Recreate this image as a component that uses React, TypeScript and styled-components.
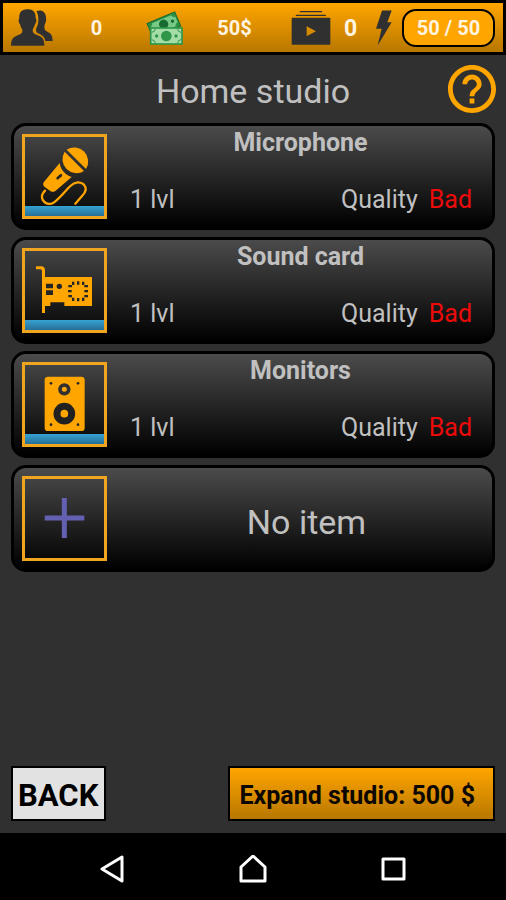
import React from "react";
import styled, { createGlobalStyle } from "styled-components";

const GlobalStyle = createGlobalStyle`
  * { box-sizing: border-box; }
  body { margin: 0; background: #303030; }
  button { font: inherit; color: inherit; cursor: pointer; }
`;

const orange = "#ffa500";
const orangeFade = "linear-gradient(#ffa500, #b87700)";

const Screen = styled.div`
  display: flex;
  flex-direction: column;
  min-height: 100vh;
  background: #303030;
  color: #c0c0c0;
  font-family: Roboto, "Liberation Sans", sans-serif;
`;

const StatusBar = styled.header`
  display: grid;
  grid-template-columns: 129fr 139fr 79fr 119px;
  align-items: center;
  gap: 6px;
  height: 55px;
  padding: 0 8px;
  border: 3px solid #000;
  background: ${orangeFade};
  color: #fff4e0;
`;

const Stat = styled.div`
  display: flex;
  align-items: center;
  justify-content: space-between;
`;

const StatValue = styled.span<{ $size?: number }>`
  flex: 1;
  padding-top: 1px;
  text-align: center;
  font-size: ${(p) => p.$size ?? 20}px;
  font-weight: 700;
`;

const EnergyPill = styled.span`
  display: flex;
  align-items: center;
  justify-content: center;
  width: 93px;
  height: 38px;
  padding-top: 1px;
  border: 2px solid #000;
  border-radius: 14px;
  background: ${orange};
  font-size: 20px;
  font-weight: 700;
`;

const TitleRow = styled.div`
  display: grid;
  grid-template-columns: 1fr auto 1fr;
  align-items: center;
  height: 68px;
  padding: 0 10px;
`;

const Title = styled.h1`
  grid-column: 2;
  margin: 0;
  padding-top: 3px;
  font-size: 34px;
  font-weight: 400;
  line-height: 40px;
`;

const IconButton = styled.button`
  display: flex;
  padding: 0;
  border: 0;
  background: none;
`;

const HelpButton = styled(IconButton)`
  justify-self: end;
`;

const ItemList = styled.ul`
  display: flex;
  flex-direction: column;
  gap: 7px;
  margin: 0;
  padding: 0 11px;
  list-style: none;
`;

const Card = styled.li`
  display: flex;
  padding: 8px 0 8px 8px;
  border: 3px solid #000;
  border-radius: 15px;
  background: linear-gradient(#4b4b4b, #000);
`;

const Thumb = styled.button`
  display: flex;
  flex-direction: column;
  width: 85px;
  height: 85px;
  padding: 0;
  border: 3px solid #efa51f;
  background: none;
  position: relative;
`;

const Wear = styled.span`
  position: absolute;
  left: 0;
  right: 0;
  bottom: 0;
  height: 10px;
  background: linear-gradient(#36a3d2, #256f96);
`;

const CardBody = styled.div`
  display: flex;
  flex: 1;
  flex-direction: column;
  justify-content: space-between;
`;

const CardName = styled.h2`
  margin: -6px 0 0;
  padding-left: 2px;
  font-size: 25px;
  font-weight: 700;
  line-height: 30px;
  text-align: center;
`;

const Details = styled.p`
  display: flex;
  gap: 11px;
  margin: 0;
  padding: 0 20px 3px 23px;
  font-size: 25px;
  line-height: 32px;
`;

const Level = styled.span`
  flex: 1;
`;

const Rating = styled.strong`
  color: #ec0b0b;
  font-weight: 400;
`;

const EmptyLabel = styled.span`
  flex: 1;
  align-self: center;
  padding: 6px 0 0 14px;
  font-size: 34px;
  line-height: 40px;
  text-align: center;
`;

const Actions = styled.div`
  display: flex;
  justify-content: space-between;
  margin-top: auto;
  padding: 12px 11px;
`;

const BackButton = styled.button`
  height: 55px;
  padding: 4px 6px 0 5px;
  border: 2px solid #000;
  background: #e2e2e2;
  && {
    color: #000;
    font-size: 31px;
    font-weight: 700;
  }
`;

const ExpandButton = styled.button`
  height: 55px;
  padding: 4px 18px 0 10px;
  border: 2px solid #000;
  background: ${orangeFade};
  && {
    color: #0c0700;
    font-size: 25px;
    font-weight: 700;
  }
`;

const SystemNav = styled.nav`
  display: flex;
  align-items: center;
  justify-content: center;
  gap: 112px;
  height: 67px;
  padding-top: 4px;
  background: #000;
`;

const FansIcon = () => (
  <svg width="42" height="37" viewBox="34 28 126 111" fill="#303030" aria-label="Fans">
    <path d="M110 35C124 28 139 36 139 54C141 64 137 69 135 76C133 83 134 91 140 95C150 100 159 103 159 124H137C135 110 126 106 115 101C108 98 108 90 111 83C119 71 117 45 110 35Z" />
    <path d="M83 29C99 28 109 38 108 55C112 60 110 70 106 74C104 82 101 85 99 90C99 99 102 102 110 105C127 111 133 113 134 138H34C35 113 43 111 58 105C66 102 69 99 68 90C65 85 63 82 61 74C57 70 55 60 59 55C58 40 64 30 83 29Z" />
  </svg>
);

const CashIcon = () => (
  <svg width="38" height="34" viewBox="438 31 114 102" aria-label="Cash">
    <g transform="rotate(-23 492 68)">
      <rect x="445" y="49" width="90" height="46" fill="#2c9144" stroke="#176b31" strokeWidth="3" />
      <path d="M459 54H521Q522 62 531 63V81Q522 82 521 90H459Q458 82 449 81V63Q458 62 459 54Z" fill="#78c886" />
      <circle cx="490" cy="70" r="14" fill="#176b31" />
      <circle cx="518" cy="72" r="5" fill="#176b31" />
    </g>
    <rect x="452" y="82" width="94" height="48" fill="#a5dda9" stroke="#2f9649" strokeWidth="5" />
    <path d="M455 95Q465 94 466 85M533 85Q533 94 543 95M455 117Q465 118 466 127M533 127Q533 118 543 117" fill="none" stroke="#2f9649" strokeWidth="3" />
    <circle cx="499" cy="106" r="16" fill="#2f9649" />
    <circle cx="470" cy="106" r="5" fill="#2f9649" />
    <circle cx="528" cy="106" r="5" fill="#2f9649" />
  </svg>
);

const VideosIcon = () => (
  <svg width="40" height="34" viewBox="113 31 120 102" fill="#303030" aria-label="Videos">
    <path d="M141 33H205M129 44H216" stroke="#303030" strokeWidth="4" strokeLinecap="round" />
    <path fillRule="evenodd" d="M117 51H229Q231 51 231 53V130Q231 132 229 132H117Q115 132 115 130V53Q115 51 117 51ZM160 77V107L188 92Z" />
  </svg>
);

const EnergyIcon = () => (
  <svg width="16" height="36" viewBox="370 29 48 107" fill="#303030" aria-label="Energy">
    <path d="M388 30H417L404 65H417L375 135L387 85H370Z" />
  </svg>
);

const HelpIcon = () => (
  <svg width="48" height="48" viewBox="2 2 20 20" fill={orange} aria-hidden="true">
    <path d="M11 18h2v-2h-2v2zm1-16C6.48 2 2 6.48 2 12s4.48 10 10 10 10-4.48 10-10S17.52 2 12 2zm0 18c-4.41 0-8-3.59-8-8s3.59-8 8-8 8 3.59 8 8-3.59 8-8 8zm0-14c-2.21 0-4 1.79-4 4h2c0-1.1.9-2 2-2s2 .9 2 2c0 2-3 1.75-3 5h2c0-2.25 3-2.5 3-5 0-2.21-1.79-4-4-4z" />
  </svg>
);

const MicrophoneIcon = () => (
  <svg width="79" height="79" viewBox="27 27 237 237" fill={orange} aria-hidden="true">
    <path d="M152 65A42 42 0 0 1 210 123Z" />
    <path d="M204 129A42 42 0 0 1 146 71Z" />
    <path fillRule="evenodd" d="M131 105C134 125 146 140 167 147L119 188Q111 194 104 190L86 177Q79 171 83 163ZM132 139L122 148Q119 154 125 155L138 145Q141 136 132 139Z" />
    <path d="M87 188C67 208 84 231 106 227C122 223 143 193 163 174C177 160 194 160 204 170C215 183 208 194 198 204L178 227" fill="none" stroke={orange} strokeWidth="7" strokeLinecap="round" />
  </svg>
);

const SoundCardIcon = () => (
  <svg width="79" height="79" viewBox="27 27 237 237" aria-hidden="true">
    <path fill={orange} d="M60 73H76Q87 74 87 85V105H228V192H145V181H103V192H87V213H78V87Q78 82 73 82H60Z" />
    <path fill="#252525" d="M90 125H111V139H90ZM90 145H111V159H90Z" />
    <circle cx="130" cy="133" r="8" fill="#252525" />
    <path fill="#252525" d="M168 119h7v10h-7zM183 118h7v10h-7zM198 119h7v10h-7zM168 167h7v10h-7zM183 168h7v10h-7zM198 167h7v10h-7zM157 129h11v7h-11zM156 144h11v7h-11zM157 159h11v7h-11zM205 129h11v7h-11zM205 144h11v7h-11zM205 159h11v7h-11z" />
  </svg>
);

const MonitorsIcon = () => (
  <svg width="79" height="79" viewBox="75 405 237 237" aria-hidden="true">
    <rect x="134" y="440" width="120" height="163" rx="10" fill={orange} />
    <g fill="#252525">
      <circle cx="153" cy="460" r="4" />
      <circle cx="234" cy="460" r="4" />
      <circle cx="153" cy="584" r="4" />
      <circle cx="234" cy="584" r="4" />
    </g>
    <circle cx="193" cy="478" r="13" fill="none" stroke="#303030" strokeWidth="11" />
    <circle cx="193" cy="551" r="22" fill="none" stroke="#202020" strokeWidth="21" />
  </svg>
);

const AddIcon = () => (
  <svg width="79" height="79" viewBox="75 87 237 237" aria-hidden="true">
    <path d="M134 204H253M193 144V264" stroke="#6360b2" strokeWidth="15" />
  </svg>
);

const items = [
  { name: "Microphone", icon: <MicrophoneIcon /> },
  { name: "Sound card", icon: <SoundCardIcon /> },
  { name: "Monitors", icon: <MonitorsIcon /> },
];

export default function App() {
  return (
    <Screen>
      <GlobalStyle />
      <StatusBar>
        <Stat>
          <FansIcon />
          <StatValue>0</StatValue>
        </Stat>
        <Stat>
          <CashIcon />
          <StatValue>50$</StatValue>
        </Stat>
        <Stat>
          <VideosIcon />
          <StatValue $size={23}>0</StatValue>
        </Stat>
        <Stat>
          <EnergyIcon />
          <EnergyPill>50 / 50</EnergyPill>
        </Stat>
      </StatusBar>

      <TitleRow>
        <Title>Home studio</Title>
        <HelpButton aria-label="Help">
          <HelpIcon />
        </HelpButton>
      </TitleRow>

      <ItemList>
        {items.map((item) => (
          <Card key={item.name}>
            <Thumb aria-label={item.name}>
              {item.icon}
              <Wear />
            </Thumb>
            <CardBody>
              <CardName>{item.name}</CardName>
              <Details>
                <Level>1 lvl</Level>
                <span>Quality</span>
                <Rating>Bad</Rating>
              </Details>
            </CardBody>
          </Card>
        ))}
        <Card>
          <Thumb aria-label="Add item">
            <AddIcon />
          </Thumb>
          <EmptyLabel>No item</EmptyLabel>
        </Card>
      </ItemList>

      <Actions>
        <BackButton>BACK</BackButton>
        <ExpandButton>Expand studio: 500 $</ExpandButton>
      </Actions>

      <SystemNav aria-label="System">
        <IconButton aria-label="Back">
          <svg width="28" height="28" viewBox="0 0 28 28" fill="none" stroke="#fff" strokeWidth="3" strokeLinejoin="round">
            <path d="M23 2V26L3 14Z" />
          </svg>
        </IconButton>
        <IconButton aria-label="Home">
          <svg width="28" height="28" viewBox="0 0 28 28" fill="none" stroke="#fff" strokeWidth="3" strokeLinejoin="round">
            <path d="M14 1L26 12V26H2V12Z" />
          </svg>
        </IconButton>
        <IconButton aria-label="Recent apps">
          <svg width="28" height="28" viewBox="0 0 28 28" fill="none" stroke="#fff" strokeWidth="3" strokeLinejoin="round">
            <path d="M4 4H25V24H4Z" />
          </svg>
        </IconButton>
      </SystemNav>
    </Screen>
  );
}
